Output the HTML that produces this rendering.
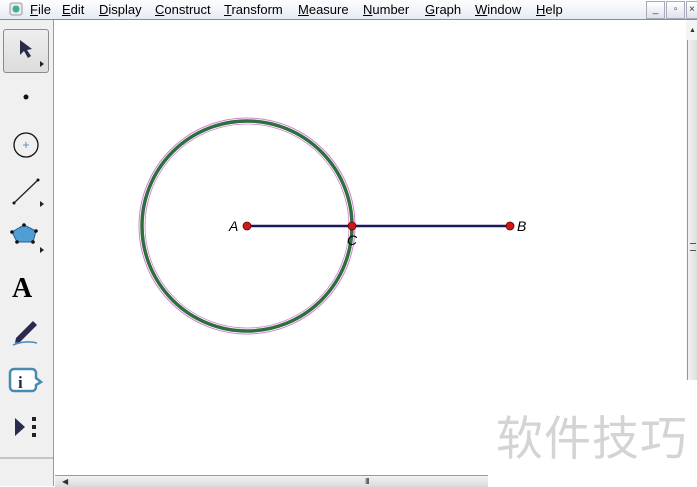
<!DOCTYPE html>
<html><head><style>
body{margin:0;width:697px;height:486px;overflow:hidden;background:#fff;font-family:"Liberation Sans",sans-serif;position:relative}
#menu{position:absolute;left:0;top:0;width:697px;height:19px;background:linear-gradient(#fdfdfe,#e6ebf3);border-bottom:1px solid #8c8c8c;font-size:13px}
#menu span{position:absolute;top:2px;color:#000}
#menu u{text-decoration:underline}
#tb{position:absolute;left:0;top:20px;width:53px;height:466px;background:#f0f0f0;border-right:1px solid #9a9a9a}
.wb{position:absolute;top:1px;width:17px;height:16px;border:1px solid #aab;background:linear-gradient(#fff,#dde3ec);font-size:10px;text-align:center;line-height:15px;color:#333}
</style></head><body>
<div id="menu">
<svg style="position:absolute;left:9px;top:2px" width="14" height="14"><rect x="1" y="1" width="12" height="12" rx="2" fill="#e8eef0" stroke="#999"/><circle cx="7" cy="7" r="3.5" fill="#4a9"/></svg>
<span style="left:30px"><u>F</u>ile</span>
<span style="left:62px"><u>E</u>dit</span>
<span style="left:99px"><u>D</u>isplay</span>
<span style="left:155px"><u>C</u>onstruct</span>
<span style="left:224px"><u>T</u>ransform</span>
<span style="left:298px"><u>M</u>easure</span>
<span style="left:363px"><u>N</u>umber</span>
<span style="left:425px"><u>G</u>raph</span>
<span style="left:475px"><u>W</u>indow</span>
<span style="left:536px"><u>H</u>elp</span>
<div class="wb" style="left:646px">_</div>
<div class="wb" style="left:666px">▫</div>
<div class="wb" style="left:686px;width:10px">×</div>
</div>
<div id="tb">
<div style="position:absolute;left:3px;top:9px;width:44px;height:42px;border:1px solid #8a8a8a;border-radius:3px;background:linear-gradient(#eee,#dcdcdc)"></div>
<svg width="53" height="466" style="position:absolute;left:0;top:0">
<path d="M20 20 L20 35 L24 31 L28 38 L31 36 L27 30 L32 29 Z" fill="#2a2a4a"/>
<path d="M40 41 l4 3 l-4 3z" fill="#222"/>
<circle cx="26" cy="77" r="2.5" fill="#111"/>
<circle cx="26" cy="125" r="12" fill="none" stroke="#111" stroke-width="1.3"/>
<path d="M23 125h6M26 122v6" stroke="#4a7ab0" stroke-width="0.8"/>
<line x1="14" y1="183" x2="38" y2="160" stroke="#222" stroke-width="1.3"/>
<circle cx="14" cy="183" r="1.5" fill="#111"/><circle cx="38" cy="160" r="1.5" fill="#111"/>
<path d="M40 181 l4 3 l-4 3z" fill="#222"/>
<path d="M24 205 L36 211 L33 222 L17 222 L12 212 Z" fill="#4f9fd4" stroke="#2a5f8a"/>
<circle cx="24" cy="205" r="1.8" fill="#111"/><circle cx="36" cy="211" r="1.8" fill="#111"/><circle cx="33" cy="222" r="1.8" fill="#111"/><circle cx="17" cy="222" r="1.8" fill="#111"/><circle cx="12" cy="212" r="1.8" fill="#111"/>
<path d="M40 227 l4 3 l-4 3z" fill="#222"/>
<text x="12" y="277" font-family="Liberation Serif" font-weight="bold" font-size="28" fill="#000">A</text>
<path d="M16 318 L33 301 L37 305 L20 322 L15 323 Z" fill="#2a2a50"/>
<path d="M13 325 Q25 320 37 323" stroke="#4a8ac0" stroke-width="1.5" fill="none"/>
<path d="M14 349 h18 a4 4 0 0 1 4 4 v5 l5 4 l-5 3 v2 a4 4 0 0 1 -4 4 h-18 a4 4 0 0 1 -4 -4 v-14 a4 4 0 0 1 4 -4z" fill="#fff" stroke="#4a8ab0" stroke-width="2.5"/>
<text x="18" y="368" font-family="Liberation Serif" font-weight="bold" font-size="17" fill="#1a2a50">i</text>
<path d="M15 398 L25 407 L15 416 Z" fill="#2a2a4a"/>
<rect x="32" y="397" width="4" height="4" fill="#222"/><rect x="32" y="405" width="4" height="4" fill="#222"/><rect x="32" y="413" width="4" height="4" fill="#222"/>
<line x1="0" y1="438" x2="53" y2="438" stroke="#9a9a9a"/>
</svg>
</div>
<svg width="697" height="486" style="position:absolute;left:0;top:0">
<circle cx="247" cy="226" r="108" fill="none" stroke="#d080d0" stroke-width="1"/>
<circle cx="247" cy="226" r="105" fill="none" stroke="#2f6f3f" stroke-width="3.5"/>
<circle cx="247" cy="226" r="102" fill="none" stroke="#d080d0" stroke-width="0.8"/>
<line x1="247" y1="226" x2="510" y2="226" stroke="#1a1a5a" stroke-width="2.5"/>
<circle cx="247" cy="226" r="4" fill="#cc1a1a" stroke="#600" stroke-width="0.8"/>
<circle cx="352" cy="226" r="4" fill="#cc1a1a" stroke="#600" stroke-width="0.8"/>
<circle cx="510" cy="226" r="4" fill="#cc1a1a" stroke="#600" stroke-width="0.8"/>
<text x="229" y="231" font-size="14" font-style="italic" font-family="Liberation Sans">A</text>
<text x="517" y="231" font-size="14" font-style="italic" font-family="Liberation Sans">B</text>
<text x="347" y="245" font-size="14" font-style="italic" font-family="Liberation Sans">C</text>
</svg>
<div style="position:absolute;left:686px;top:20px;width:11px;height:360px;background:#f4f4f4"></div>
<div style="position:absolute;left:689px;top:27px;font-size:7px;color:#333">▲</div>
<div style="position:absolute;left:687px;top:40px;width:10px;height:340px;border-left:1px solid #999;background:linear-gradient(90deg,#f2f2f2,#dcdcdc)"></div>
<div style="position:absolute;left:690px;top:243px;width:6px;height:6px;border-top:1px solid #555;border-bottom:1px solid #555"></div>
<div style="position:absolute;left:55px;top:475px;width:433px;height:11px;background:linear-gradient(#f2f2f2,#dadada);border-top:1px solid #999"></div>
<div style="position:absolute;left:62px;top:477px;font-size:8px;color:#333">◀</div>
<div style="position:absolute;left:365px;top:477px;font-size:8px;color:#333;letter-spacing:-1px">III</div>
<div style="position:absolute;left:496px;top:400px;font-family:'Liberation Sans','Noto Sans CJK SC',sans-serif;font-size:47px;color:#d4d4d4;letter-spacing:1px">软件技巧</div>
</body></html>
